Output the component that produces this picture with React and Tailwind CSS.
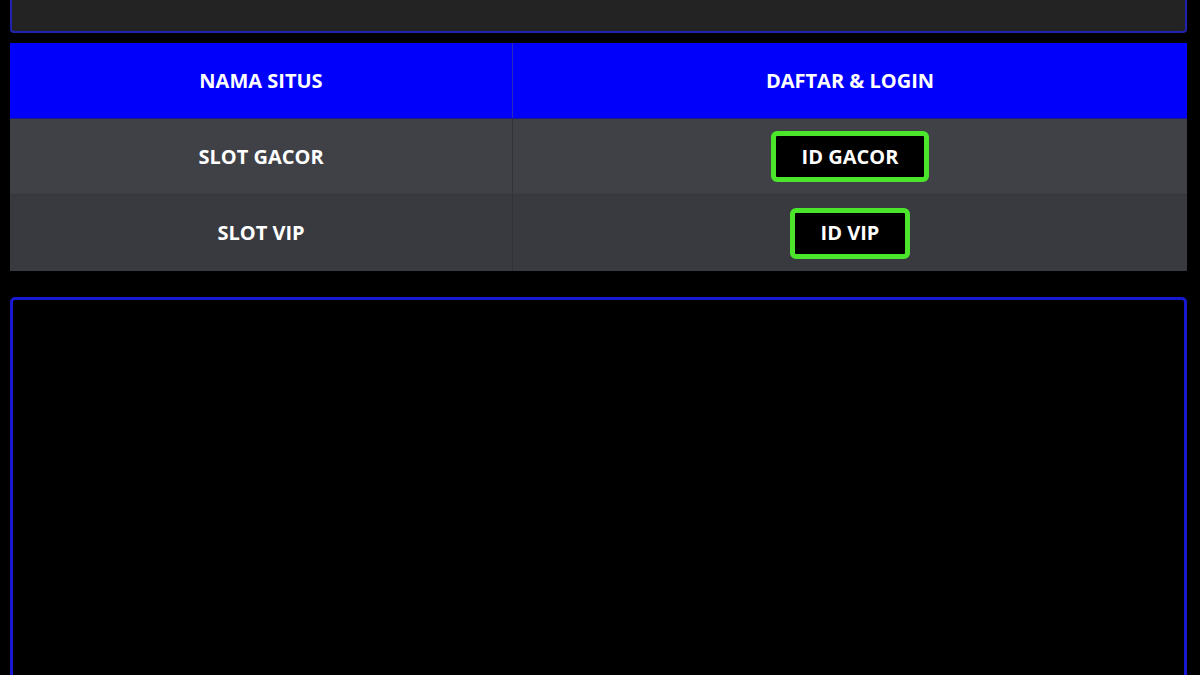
export default function App() {
  const font = { fontFamily: '"Open Sans", "Noto Sans", sans-serif' };
  const rows = [
    { name: "SLOT GACOR", btn: "ID GACOR", bg: "bg-[#3f4147]" },
    { name: "SLOT VIP", btn: "ID VIP", bg: "bg-[#383a3f]" },
  ];
  return (
    <div className="h-[675px] w-[1200px] bg-black px-[10px] overflow-hidden" style={font}>
      <div className="h-[33px] bg-[#232323] border-2 border-t-0 border-[#2222b0] rounded-b-[4px] mr-[3px]" />
      <div className="mt-[10px] w-[1177px]">
        <div className="grid grid-cols-[503px_1fr] h-[76px] bg-[#0000fb] border-b border-[#1a1a8a]">
          <div className="flex items-center justify-center border-r border-[#2a2ab8] text-white font-bold text-[20px]">
            NAMA SITUS
          </div>
          <div className="flex items-center justify-center text-white font-bold text-[20px]">
            DAFTAR &amp; LOGIN
          </div>
        </div>
        {rows.map((r, i) => (
          <div
            key={r.name}
            className={`grid grid-cols-[503px_1fr] h-[76px] ${r.bg} ${i === 0 ? "border-b border-[#34363a]" : ""}`}
          >
            <div className="flex items-center justify-center border-r border-[#313338] text-white font-bold text-[20px]">
              {r.name}
            </div>
            <div className="flex items-center justify-center">
              <div className="h-[51px] px-[26px] flex items-center bg-black border-[5px] border-[#4be52b] rounded-[6px] text-white font-bold text-[20px]">
                {r.btn}
              </div>
            </div>
          </div>
        ))}
      </div>
      <div className="mt-[26px] h-[420px] w-[1177px] bg-black border-[3px] border-[#1818d0] rounded-[5px]" />
    </div>
  );
}
